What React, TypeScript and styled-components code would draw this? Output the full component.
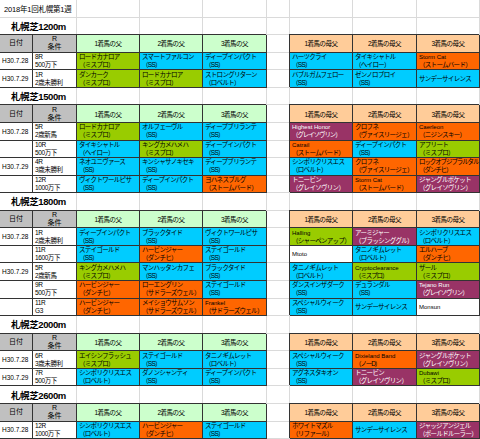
import React from "react"
import styled, { createGlobalStyle } from "styled-components"

type Fill = "c" | "g" | "o" | "p" | "w"
type Horse = { name: string; line?: string; fill: Fill }
type Race = { date?: string; r: string; cond: string; sires: Horse[]; dams: Horse[] }
type Section = { title: string; races: Race[] }

const h = (name: string, line: string | undefined, fill: Fill): Horse => ({ name, line, fill })

const FILLS: Record<Fill, string> = {
    c: "#00ccff",
    g: "#99cc00",
    o: "#ff6600",
    p: "#993366",
    w: "#ffffff",
}

const SECTIONS: Section[] = [
    {
        title: "1200m",
        races: [
            {
                date: "H30.7.28", r: "8R", cond: "500万下",
                sires: [h("ロードカナロア", "ミスプロ", "g"), h("スマートファルコン", "SS", "c"), h("ディープインパクト", "SS", "c")],
                dams: [h("ハーツクライ", "SS", "c"), h("タイキシャトル", "ヘイロー", "c"), h("Storm Cat", "ストームバード", "o")],
            },
            {
                date: "H30.7.29", r: "1R", cond: "2歳未勝利",
                sires: [h("ダンカーク", "ミスプロ", "g"), h("ロードカナロア", "ミスプロ", "g"), h("ストロングリターン", "ロベルト", "c")],
                dams: [h("バブルガムフェロー", "SS", "c"), h("ゼンノロブロイ", "SS", "c"), h("サンデーサイレンス", undefined, "c")],
            },
        ],
    },
    {
        title: "1500m",
        races: [
            {
                date: "H30.7.28", r: "5R", cond: "2歳新馬",
                sires: [h("ロードカナロア", "ミスプロ", "g"), h("オルフェーヴル", "SS", "c"), h("ディープブリランテ", "SS", "c")],
                dams: [h("Highest Honor", "グレイソヴリン", "p"), h("クロフネ", "ヴァイスリージェ", "o"), h("Caerleon", "ニジンスキー", "o")],
            },
            {
                r: "10R", cond: "500万下",
                sires: [h("タイキシャトル", "ヘイロー", "c"), h("キングカメハメハ", "ミスプロ", "g"), h("ディープインパクト", "SS", "c")],
                dams: [h("Catrail", "ストームバード", "o"), h("ディープインパクト", "SS", "c"), h("アフリート", "ミスプロ", "g")],
            },
            {
                date: "H30.7.29", r: "4R", cond: "3歳未勝利",
                sires: [h("ネオユニヴァース", "SS", "c"), h("キンシャサノキセキ", "SS", "c"), h("ディープブリランテ", "SS", "c")],
                dams: [h("シンボリクリスエス", "ロベルト", "c"), h("クロフネ", "ヴァイスリージェ", "o"), h("ロックオブジブラルタル", "ダンチヒ", "o")],
            },
            {
                r: "12R", cond: "1000万下",
                sires: [h("ヴィクトワールピサ", "SS", "c"), h("ディープインパクト", "SS", "c"), h("ヨハネスブルグ", "ストームバード", "o")],
                dams: [h("トニービン", "グレイソヴリン", "p"), h("Storm Cat", "ストームバード", "o"), h("ジャングルポケット", "グレイソヴリン", "p")],
            },
        ],
    },
    {
        title: "1800m",
        races: [
            {
                date: "H30.7.28", r: "1R", cond: "2歳未勝利",
                sires: [h("ディープインパクト", "SS", "c"), h("ブラックタイド", "SS", "c"), h("ヴィクトワールピサ", "SS", "c")],
                dams: [h("Halling", "シャーペンアップ", "g"), h("アーミジャー", "ブラッシンググル", "p"), h("シンボリクリスエス", "ロベルト", "c")],
            },
            {
                r: "11R", cond: "1600万下",
                sires: [h("ステイゴールド", "SS", "c"), h("ハービンジャー", "ダンチヒ", "o"), h("ステイゴールド", "SS", "c")],
                dams: [h("Mtoto", undefined, "w"), h("タニノギムレット", "ロベルト", "c"), h("エルハーブ", "ダンチヒ", "o")],
            },
            {
                date: "H30.7.29", r: "5R", cond: "2歳新馬",
                sires: [h("キングカメハメハ", "ミスプロ", "g"), h("マンハッタンカフェ", "SS", "c"), h("ブラックタイド", "SS", "c")],
                dams: [h("タニノギムレット", "ロベルト", "c"), h("Cryptoclearance", "ミスプロ", "g"), h("ザール", "ミスプロ", "g")],
            },
            {
                r: "9R", cond: "500万下",
                sires: [h("ハービンジャー", "ダンチヒ", "o"), h("ローエングリン", "サドラーズウェル", "o"), h("ステイゴールド", "SS", "c")],
                dams: [h("ダンスインザダーク", "SS", "c"), h("デュランダル", "SS", "c"), h("Tejano Run", "グレイソヴリン", "p")],
            },
            {
                r: "11R", cond: "G3",
                sires: [h("ハービンジャー", "ダンチヒ", "o"), h("メイショウサムソン", "サドラーズウェル", "o"), h("Frankel", "サドラーズウェル", "o")],
                dams: [h("スペシャルウィーク", "SS", "c"), h("サンデーサイレンス", undefined, "c"), h("Monsun", undefined, "w")],
            },
        ],
    },
    {
        title: "2000m",
        races: [
            {
                date: "H30.7.28", r: "6R", cond: "3歳未勝利",
                sires: [h("エイシンフラッシュ", "ミスプロ", "g"), h("ステイゴールド", "SS", "c"), h("タニノギムレット", "ロベルト", "c")],
                dams: [h("スペシャルウィーク", "SS", "c"), h("Dixieland Band", "ノーD", "o"), h("ジャングルポケット", "グレイソヴリン", "p")],
            },
            {
                date: "H30.7.29", r: "7R", cond: "500万下",
                sires: [h("シンボリクリスエス", "ロベルト", "c"), h("ダノンシャンティ", "SS", "c"), h("ディープインパクト", "SS", "c")],
                dams: [h("アグネスタキオン", "SS", "c"), h("トニービン", "グレイソヴリン", "p"), h("Dubawi", "ミスプロ", "g")],
            },
        ],
    },
    {
        title: "2600m",
        races: [
            {
                date: "H30.7.28", r: "12R", cond: "1000万下",
                sires: [h("シンボリクリスエス", "ロベルト", "c"), h("ハービンジャー", "ダンチヒ", "o"), h("ステイゴールド", "SS", "c")],
                dams: [h("ホワイトマズル", "リファール", "o"), h("サンデーサイレンス", undefined, "c"), h("ジャッジアンジェル", "ボールドルーラー", "p")],
            },
        ],
    },
]

const isLatin = (s: string) => /^[A-Za-z ]+$/.test(s)

function HorseBox({ horse }: { horse: Horse }) {
    return (
        <HorseCell $fill={horse.fill} $tight={horse.name.length > 9}>
            {isLatin(horse.name) ? <Latin>{horse.name}</Latin> : <span>{horse.name}</span>}
            {horse.line && <span>（{horse.line}）</span>}
        </HorseCell>
    )
}

function Blanks({ n }: { n: number }) {
    return <>{Array.from({ length: n }, (_, i) => <Blank key={i} />)}</>
}

export default function App() {
    return (
        <>
            <GlobalStyle />
            <Sheet>
                <Row>
                    <Title>2018年1回札幌第1週</Title>
                    <Blanks n={7} />
                </Row>
                {SECTIONS.map((section) => (
                    <React.Fragment key={section.title}>
                        <Row>
                            <Heading>札幌芝{section.title}</Heading>
                            <Blanks n={7} />
                        </Row>
                        <Row>
                            <GrayHead>日付</GrayHead>
                            <GrayHead>
                                <span>R</span>
                                <span>条件</span>
                            </GrayHead>
                            {[1, 2, 3].map((n) => (
                                <ColHead key={n} $tone="#ccffcc">{n}着馬の父</ColHead>
                            ))}
                            <Blank />
                            {[1, 2, 3].map((n) => (
                                <ColHead key={n} $tone="#ffcc99">{n}着馬の母父</ColHead>
                            ))}
                        </Row>
                        {section.races.map((race, i) => (
                            <Row key={i}>
                                <DateCell>{race.date}</DateCell>
                                <RaceCell>
                                    <span>{race.r}</span>
                                    <span>{race.cond}</span>
                                </RaceCell>
                                {race.sires.map((horse, j) => <HorseBox key={j} horse={horse} />)}
                                <Blank />
                                {race.dams.map((horse, j) => <HorseBox key={j} horse={horse} />)}
                            </Row>
                        ))}
                    </React.Fragment>
                ))}
            </Sheet>
        </>
    )
}

const GlobalStyle = createGlobalStyle`
html, body {
    margin: 0;
    padding: 0;
    background: #ffffff;
}
body {
    font-family: "Liberation Sans", "Noto Sans CJK JP", sans-serif;
    color: #000000;
}
`

const Sheet = styled.div`
width: 480px;
height: 439px;
display: flex;
flex-direction: column;
overflow: hidden;
`

const Row = styled.div`
flex: 1;
min-height: 0;
display: grid;
grid-template-columns: 33px 44px 63px 63px 64px 23px 63px 64px 63px;
`

const Blank = styled.div`
box-sizing: border-box;
min-width: 0;
background: #ffffff;
border-right: 1px solid #dadada;
border-bottom: 1px solid #dadada;
`

const Title = styled(Blank)`
grid-column: span 2;
display: flex;
align-items: center;
padding-left: 4px;
font-size: 7.5px;
letter-spacing: -0.2px;
white-space: nowrap;
`

const Heading = styled(Blank)`
grid-column: span 2;
display: flex;
align-items: center;
padding-left: 11px;
font-size: 9.5px;
font-weight: 700;
letter-spacing: -0.4px;
white-space: nowrap;
`

const Boxed = styled.div`
box-sizing: border-box;
min-width: 0;
overflow: hidden;
white-space: nowrap;
border-right: 1px solid #333333;
border-bottom: 1px solid #333333;
box-shadow: -1px -1px 0 #333333;
`

const GrayHead = styled(Boxed)`
background: #c0c0c0;
display: flex;
flex-direction: column;
align-items: center;
justify-content: center;
font-size: 7px;
line-height: 8px;
`

const ColHead = styled(Boxed)<{ $tone: string }>`
background: ${(p) => p.$tone};
display: flex;
align-items: center;
justify-content: center;
font-size: 6.5px;
letter-spacing: -0.5px;
`

const DateCell = styled(Boxed)`
background: #ffffff;
display: flex;
align-items: center;
padding-left: 2px;
font-size: 6.5px;
`

const RaceCell = styled(Boxed)`
background: #ffffff;
display: flex;
flex-direction: column;
justify-content: center;
padding-left: 2px;
font-size: 6.5px;
line-height: 8px;
letter-spacing: -0.4px;
`

const HorseCell = styled(Boxed)<{ $fill: Fill; $tight: boolean }>`
background: ${(p) => FILLS[p.$fill]};
color: ${(p) => (p.$fill === "p" ? "#ffffff" : "#000000")};
display: flex;
flex-direction: column;
justify-content: center;
padding: 0 1px 0 2px;
font-size: 6.5px;
line-height: 8px;
letter-spacing: ${(p) => (p.$tight ? "-1.1px" : "-0.7px")};
`

const Latin = styled.span`
font-size: 6px;
letter-spacing: 0;
`
